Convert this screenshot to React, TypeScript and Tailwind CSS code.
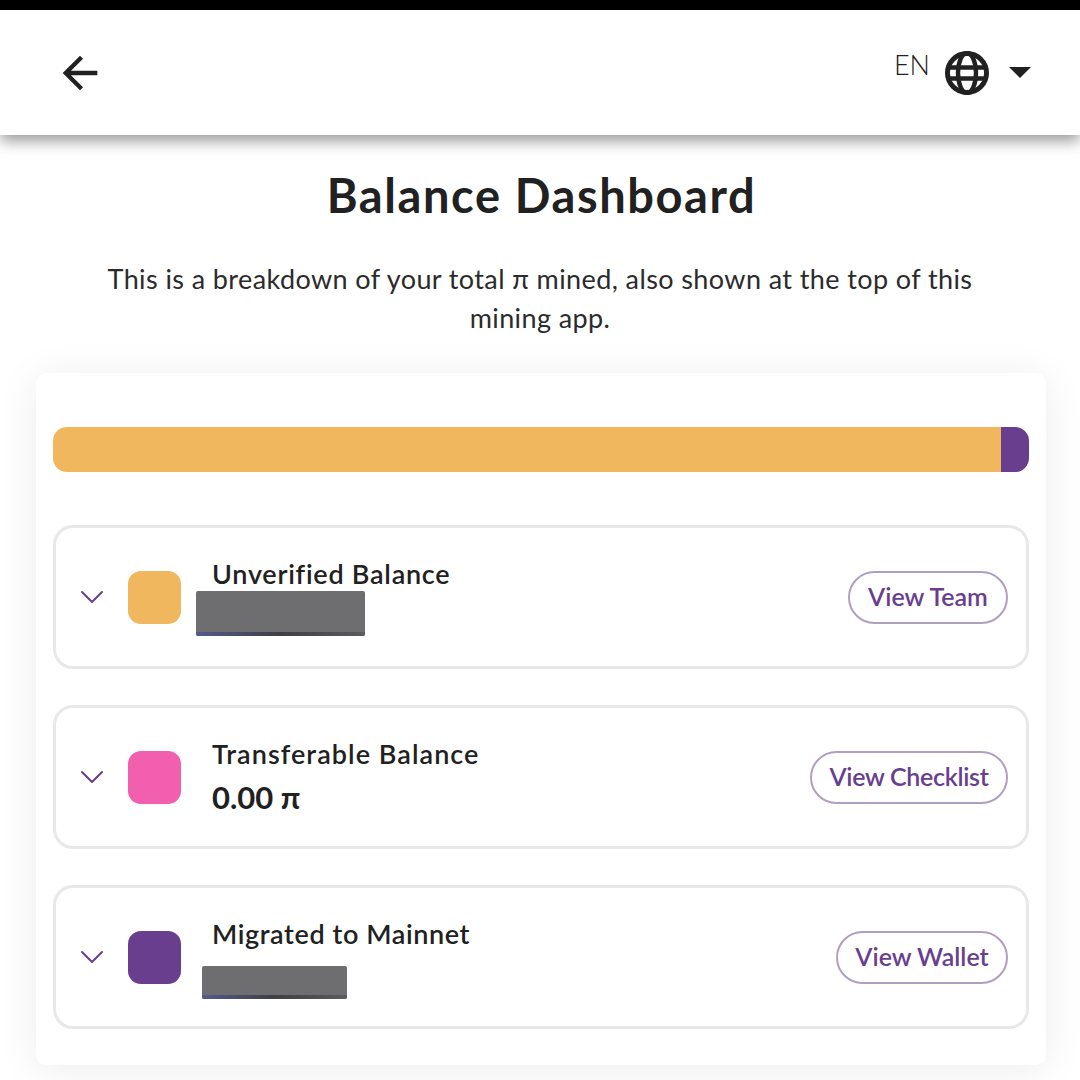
import { ChevronDown } from "lucide-react";
import { MdArrowBack } from "react-icons/md";

const rows = [
  { label: "Unverified Balance", labelClass: "tracking-[0.75px]", color: "bg-[#f0b75f]", action: "View Team", actionClass: "w-[160px]", redact: "w-[169px] h-[45px] -ml-[16px] -mt-[1px]" },
  { label: "Transferable Balance", labelClass: "tracking-[1.05px]", color: "bg-[#f15fae]", action: "View Checklist", actionClass: "w-[198px] tracking-[-0.3px]", value: "0.00 π" },
  { label: "Migrated to Mainnet", labelClass: "tracking-[0.6px]", color: "bg-[#693e8e]", action: "View Wallet", actionClass: "w-[172px]", redact: "w-[145px] h-[39px] -ml-[10px] mt-[14px]" },
];

function Globe() {
  return (
    <svg viewBox="0 0 44 44" className="h-[44px] w-[44px]" fill="none" stroke="#212121">
      <circle cx="22" cy="22" r="19.5" strokeWidth="5" />
      <ellipse cx="22" cy="22" rx="9" ry="20" strokeWidth="4.4" />
      <path d="M3 16.5h38M3 27.5h38" strokeWidth="4.6" />
    </svg>
  );
}

function BalanceRow({ row }: { row: (typeof rows)[number] }) {
  return (
    <div className="flex h-[144px] items-center rounded-[20px] border-[3px] border-[#e8e8e8] pl-[16px] pr-[18px]">
      <ChevronDown className="h-[40px] w-[40px] shrink-0 text-[#693e8e]" strokeWidth={1.2} />
      <div className={`ml-[16px] h-[53px] w-[53px] shrink-0 rounded-[13px] ${row.color}`} />
      <div className="ml-[31px] flex h-[84px] flex-1 flex-col self-center pt-[1px]">
        <div className={`text-[27px] font-semibold leading-[36px] text-[#212121] ${row.labelClass}`}>{row.label}</div>
        {row.value ? (
          <div className="mt-[5px] text-[31px] font-bold leading-[40px] text-[#212121]">{row.value}</div>
        ) : (
          <div className={`flex flex-col justify-end overflow-hidden rounded-[2px] bg-[#6e6e70] ${row.redact}`}>
            <div className="h-[4px] bg-gradient-to-r from-[#55598c] via-[#3f3f44] to-[#5c5c60]" />
          </div>
        )}
      </div>
      <div className={`flex h-[53px] items-center justify-center rounded-full border-2 border-[#b19fc1] text-[25px] font-semibold text-[#693e8e] ${row.actionClass}`}>
        {row.action}
      </div>
    </div>
  );
}

export default function App() {
  return (
    <div className="flex h-[1080px] flex-col overflow-hidden bg-white font-['Lato','Noto_Sans',sans-serif]">
      <div className="h-[10px] shrink-0 bg-black" />
      <header className="z-10 flex h-[125px] shrink-0 items-center justify-between bg-white pl-[54px] pr-[49px] shadow-[0_6px_14px_rgba(0,0,0,0.4)]">
        <MdArrowBack className="h-[52px] w-[52px] text-[#212121]" />
        <div className="flex items-center">
          <span className="-mt-[14px] mr-[15px] text-[27px] font-light text-[#212121]">EN</span>
          <Globe />
          <div className="ml-[20px] h-0 w-0 border-x-[11px] border-t-[11px] border-x-transparent border-t-[#212121]" />
        </div>
      </header>
      <main className="flex flex-col">
        <h1 className="mt-[30px] pl-[3px] text-center text-[47px] font-bold leading-[60px] tracking-[1.6px] text-[#212121]">Balance Dashboard</h1>
        <p className="mx-auto mt-[34px] w-[900px] text-center text-[27px] leading-[39px] tracking-[0.4px] text-[#2b2b2b]">
          This is a breakdown of your total π mined, also shown at the top of this mining app.
        </p>
      </main>
      <div className="flex-1 pl-[36px] pr-[34px] pt-[36px]">
        <section className="rounded-[10px] bg-white px-[17px] pb-[36px] pt-[54px] shadow-[0_4px_40px_rgba(0,0,0,0.08)]">
          <div className="flex h-[45px] overflow-hidden rounded-[14px]">
            <div className="flex-1 bg-[#f0b75f]" />
            <div className="w-[28px] bg-[#693e8e]" />
          </div>
          <div className="mt-[53px] flex flex-col gap-[36px]">
            {rows.map((row) => (
              <BalanceRow key={row.label} row={row} />
            ))}
          </div>
        </section>
      </div>
    </div>
  );
}
